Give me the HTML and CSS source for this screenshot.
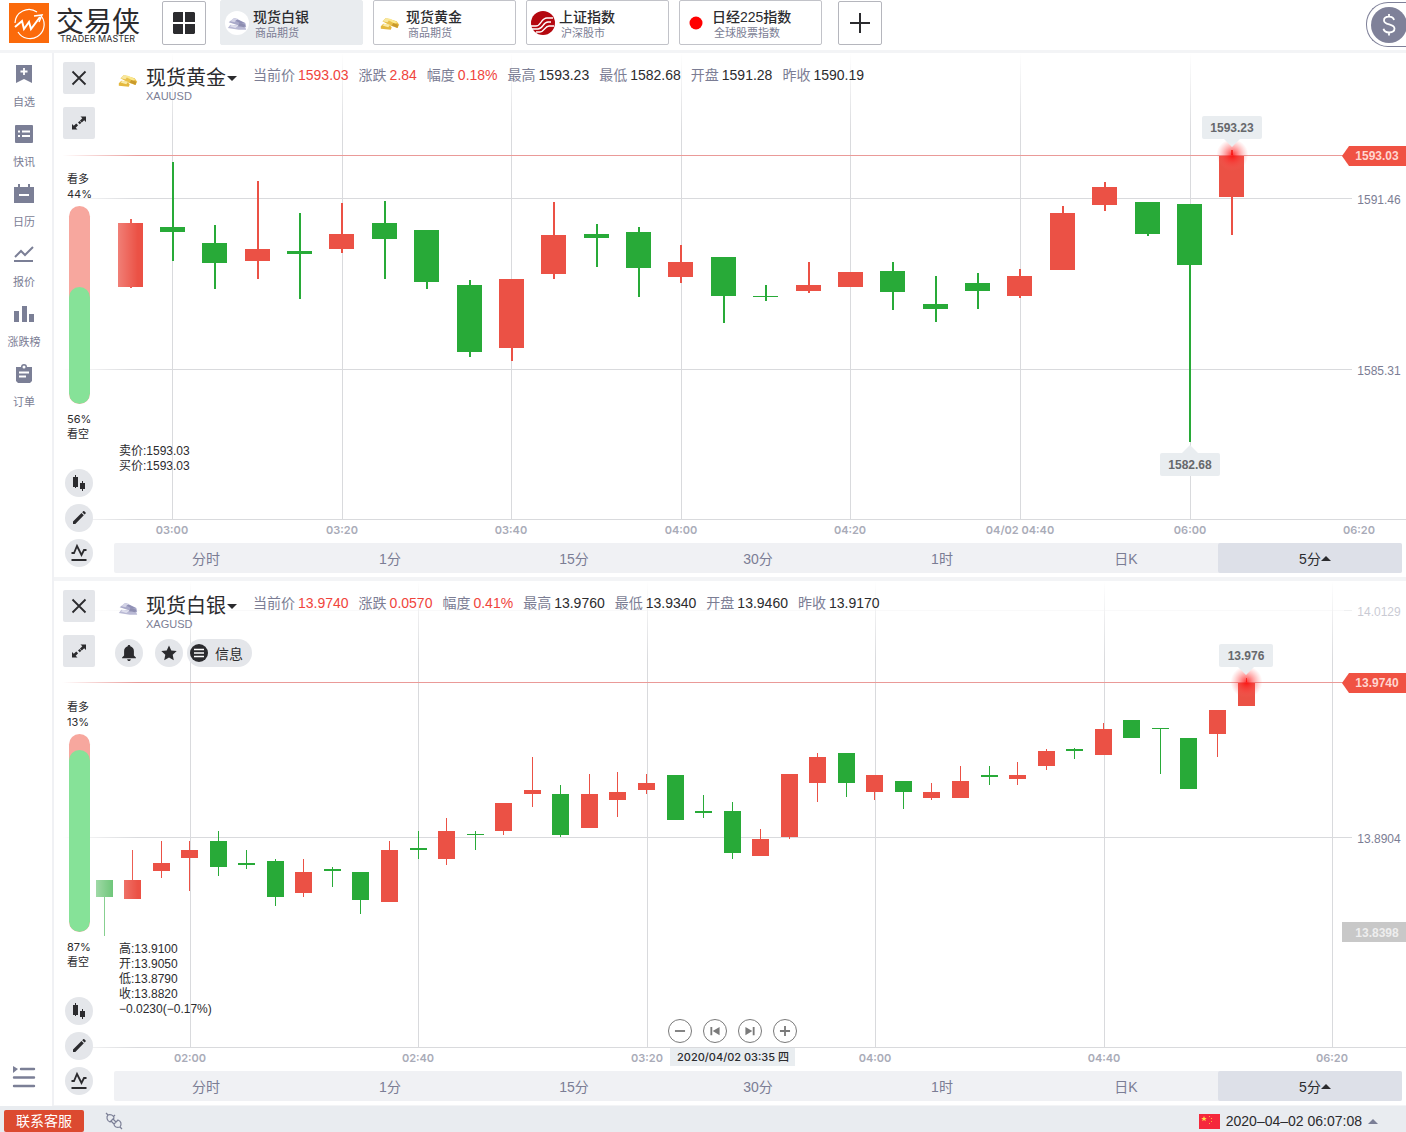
FILE: index.html
```
<!DOCTYPE html>
<html lang="zh-CN">
<head>
    <meta charset="UTF-8">
    <meta name="viewport" content="width=device-width, initial-scale=1.0">
    <title>交易侠</title>
    <link rel="stylesheet" href="styles.css">
</head>
<body>

    <!-- Shared icons -->
    <svg class="sprite" aria-hidden="true">
        <symbol id="i-gold" viewBox="0 0 24 24">
            <path d="M3 10l4-4 13 4 3 4-2 4-9-3z" fill="#e9c04a"/>
            <path d="M3 10l4-4 5 1-3 4z" fill="#f8e7a0"/>
            <path d="M9 8l3-1 9 4-3 2z" fill="#fbe98f"/>
            <path d="M1 16l3-3 7 1 3 3-1 3-12-1z" fill="#e4b83e"/>
            <path d="M3 15l2-2 7 1-2 3z" fill="#f9eaa6"/>
            <path d="M14 15l7 3 1-4-6-2z" fill="#c99a2c"/>
        </symbol>
        <symbol id="i-silver" viewBox="0 0 24 24">
            <path d="M2 11l7-5 5 2 8 4 1 5-9-2z" fill="#a9a9c9"/>
            <path d="M4 10l4-4 5 1-4 4z" fill="#d3d3e6"/>
            <path d="M10 9l3-1 8 4-4 1z" fill="#8f8fb5"/>
            <path d="M1 18l3-4 8 1 10 2 1 3-9 0z" fill="#b9b9d4"/>
            <path d="M3 16l3-2 7 2-3 2z" fill="#dedeed"/>
            <path d="M13 16l8 1 1-3-7-2z" fill="#8d8db0"/>
        </symbol>
        <symbol id="i-close" viewBox="0 0 32 32">
            <path d="M9.500 9.500l13 13M22.500 9.500l-13 13" stroke="#2b2b2e" stroke-width="1.800" fill="none"/>
        </symbol>
        <symbol id="i-expand" viewBox="0 0 32 32">
            <path d="M17.500 9.500H23V15l-1.800-1.800-2.400 2.400-1.900-1.900 2.400-2.400zM14.500 22.500H9V17l1.800 1.800 2.400-2.400 1.900 1.900-2.400 2.400zM15 15.500l1.500-1.500 1.800 1.800-1.500 1.500z" fill="#2b2b2e"/>
        </symbol>
        <symbol id="i-candles" viewBox="0 0 28 28">
            <path d="M8 8h2V6h1v2h2v10h-2v1h-1v-1H8zM15 14h2v-2h1v2h2v6h-2v2h-1v-2h-2z" fill="#2b2b2e"/>
        </symbol>
        <symbol id="i-pencil" viewBox="0 0 28 28">
            <path d="M8 20v-2.500l8.500-8.500 2.300 2.300-8.500 8.700zM17.200 8.300l1-1c.4-.4.8-.3 1.100 0l1.300 1.300c.3.300.3.700 0 1l-1 1z" fill="#2b2b2e"/>
        </symbol>
        <symbol id="i-pulse" viewBox="0 0 28 28">
            <path d="M6.500 14h2.500l3-7 4.500 9 2.500-5h2.500" stroke="#2b2b2e" stroke-width="1.800" fill="none"/>
            <path d="M6.500 20h15v2h-15z" fill="#2b2b2e"/>
        </symbol>
    </svg>

    <header class="header">
        <div class="logo">
            <svg width="40" height="40" viewBox="0 0 40 40">
                <rect width="40" height="40" fill="#fb6a0b"/>
                <path d="M28 9A14 14 0 0 0 6 20M9 29a14 14 0 0 0 24-15" fill="none" stroke="#fff" stroke-width="1.200"/>
                <path d="M6 24l7-6 2 8 5-7 2 7 9-12" fill="none" stroke="#fff" stroke-width="2"/>
                <path d="M25 13l8-1-3 7" fill="none" stroke="#fff" stroke-width="1.500"/>
            </svg>
            <div class="logo-text">
                <span class="logo-name">交易侠</span>
                <span class="logo-sub">TRADER MASTER</span>
            </div>
        </div>
        <button class="square-btn" aria-label="布局">
            <svg width="22" height="22" viewBox="0 0 22 22"><path d="M1 0h9v10H0V1zM12 0h9l1 1v9H12zM0 12h10v10H1l-1-1zM12 12h10v9l-1 1h-9z" fill="#2b2b2e"/></svg>
        </button>
        <div class="symbols">
            <button class="symbol active">
                <svg width="24" height="24" viewBox="0 0 24 24"><circle cx="12" cy="12" r="12" fill="#fff"/><use href="#i-silver" x="2" y="2" width="20" height="20"/></svg>
                <span class="symbol-text"><span class="symbol-name">现货白银</span><span class="symbol-type">商品期货</span></span>
            </button>
            <button class="symbol">
                <svg width="24" height="24" viewBox="0 0 24 24"><use href="#i-gold" x="2" y="2" width="20" height="20"/></svg>
                <span class="symbol-text"><span class="symbol-name">现货黄金</span><span class="symbol-type">商品期货</span></span>
            </button>
            <button class="symbol">
                <svg width="24" height="24" viewBox="0 0 24 24">
                    <circle cx="12" cy="12" r="12" fill="#b4080f"/>
                    <path d="M0 15h5c5 0 5-8 11-8h6M1 18h6c5 0 5-7 10-7h3M5 21h4c4 0 5-6 9-6h5" fill="none" stroke="#fff" stroke-width="1.300"/>
                </svg>
                <span class="symbol-text"><span class="symbol-name">上证指数</span><span class="symbol-type">沪深股市</span></span>
            </button>
            <button class="symbol">
                <svg width="24" height="24" viewBox="0 0 24 24"><circle cx="12" cy="12" r="6.500" fill="#f00"/></svg>
                <span class="symbol-text"><span class="symbol-name">日经225指数</span><span class="symbol-type">全球股票指数</span></span>
            </button>
        </div>
        <button class="square-btn" aria-label="添加">
            <svg width="20" height="20" viewBox="0 0 20 20"><path d="M10 0v20M0 10h20" stroke="#2b2b2e" stroke-width="2"/></svg>
        </button>
        <button class="account" aria-label="账户">
            <svg width="36" height="36" viewBox="0 0 36 36">
                <circle cx="18" cy="18" r="18" fill="#7f8199"/>
                <path d="M23 13c-.5-2.300-2.300-3.300-5-3.300s-5 1.300-5 3.700c0 5.200 10.500 2.900 10.500 8.200 0 2.500-2.200 3.900-5.300 3.900s-5.200-1.400-5.700-3.700M18 7v3M18 25.500v3" fill="none" stroke="#fff" stroke-width="1.800"/>
            </svg>
        </button>
    </header>

    <div class="body">
        <nav class="sidebar">
            <a href="#"><svg width="20" height="20" viewBox="0 0 20 20"><path d="M2 1h16v18l-8-4-8 4z" fill="#7b7f96"/><path d="M10 4v7M6.500 7.500h7" stroke="#fff" stroke-width="1.800"/></svg>自选</a>
            <a href="#"><svg width="20" height="20" viewBox="0 0 20 20"><rect x="1" y="1" width="18" height="18" rx="1" fill="#7b7f96"/><path d="M4 7.500h2M8 7.500h8M4 12h2M8 12h8" stroke="#fff" stroke-width="2"/></svg>快讯</a>
            <a href="#"><svg width="20" height="20" viewBox="0 0 20 20"><path d="M0 3h4V0h2v3h8V0h2v3h4v16H0z" fill="#7b7f96"/><path d="M5 11h10" stroke="#fff" stroke-width="2"/></svg>日历</a>
            <a href="#"><svg width="20" height="20" viewBox="0 0 20 20"><path d="M1 13l6-6 4 4 8-8" fill="none" stroke="#7b7f96" stroke-width="2"/><path d="M0 16h19v2H0z" fill="#7b7f96"/></svg>报价</a>
            <a href="#"><svg width="20" height="20" viewBox="0 0 20 20"><path d="M0 7h5v11H0zM8 2h5v16H8zM15 10h5v8h-5z" fill="#7b7f96"/></svg>涨跌榜</a>
            <a href="#"><svg width="20" height="20" viewBox="0 0 20 20"><path d="M2 3h5a3 3 0 0 1 6 0h5v14l-2 2H4l-2-2z" fill="#7b7f96"/><circle cx="10" cy="3" r="1.500" fill="#fff"/><path d="M5 8.500h10M5 12.500h7" stroke="#fff" stroke-width="1.800"/></svg>订单</a>
            <button class="menu-btn" aria-label="菜单">
                <svg width="24" height="22" viewBox="0 0 24 22"><path d="M1 0l5 3-5 4z" fill="#7b7f96"/><path d="M9 3h13M2 11.500h20M2 20h20" stroke="#7b7f96" stroke-width="2.400" stroke-linecap="round"/></svg>
            </button>
        </nav>

        <main class="panels">
            <section class="panel">
                <svg class="chart" id="chart-gold" viewBox="0 0 1352 490"></svg>
                <div class="tools">
                    <button class="tool-btn" aria-label="关闭"><svg><use href="#i-close"/></svg></button>
                    <button class="tool-btn" aria-label="全屏"><svg><use href="#i-expand"/></svg></button>
                    <div class="sentiment">
                        <span>看多</span>
                        <span>44%</span>
                        <div class="gauge"><div class="gauge-short" style="height: 59%"></div></div>
                        <span>56%</span>
                        <span>看空</span>
                    </div>
                    <button class="round-btn" aria-label="图形"><svg><use href="#i-candles"/></svg></button>
                    <button class="round-btn" aria-label="画线"><svg><use href="#i-pencil"/></svg></button>
                    <button class="round-btn" aria-label="指标"><svg><use href="#i-pulse"/></svg></button>
                </div>
                <div class="info">
                    <div class="quote">
                        <svg class="quote-icon" viewBox="0 0 24 24"><use href="#i-gold"/></svg>
                        <button class="quote-name"><span class="name">现货黄金<i class="caret-down"></i></span><span class="code">XAUUSD</span></button>
                        <dl class="stats">
                            <div class="up"><dt>当前价</dt><dd>1593.03</dd></div>
                            <div class="up"><dt>涨跌</dt><dd>2.84</dd></div>
                            <div class="up"><dt>幅度</dt><dd>0.18%</dd></div>
                            <div><dt>最高</dt><dd>1593.23</dd></div>
                            <div><dt>最低</dt><dd>1582.68</dd></div>
                            <div><dt>开盘</dt><dd>1591.28</dd></div>
                            <div><dt>昨收</dt><dd>1590.19</dd></div>
                        </dl>
                    </div>
                    <div class="readout readout-quote">
                        <span>卖价:1593.03</span>
                        <span>买价:1593.03</span>
                    </div>
                </div>
                <div class="periods">
                    <button>分时</button>
                    <button>1分</button>
                    <button>15分</button>
                    <button>30分</button>
                    <button>1时</button>
                    <button>日K</button>
                    <button class="active">5分<i class="caret-up"></i></button>
                </div>
            </section>

            <section class="panel">
                <svg class="chart" id="chart-silver" viewBox="0 0 1352 490"></svg>
                <div class="tools">
                    <button class="tool-btn" aria-label="关闭"><svg><use href="#i-close"/></svg></button>
                    <button class="tool-btn" aria-label="全屏"><svg><use href="#i-expand"/></svg></button>
                    <div class="sentiment">
                        <span>看多</span>
                        <span>13%</span>
                        <div class="gauge"><div class="gauge-short" style="height: 92%"></div></div>
                        <span>87%</span>
                        <span>看空</span>
                    </div>
                    <button class="round-btn" aria-label="图形"><svg><use href="#i-candles"/></svg></button>
                    <button class="round-btn" aria-label="画线"><svg><use href="#i-pencil"/></svg></button>
                    <button class="round-btn" aria-label="指标"><svg><use href="#i-pulse"/></svg></button>
                </div>
                <div class="info">
                    <div class="quote">
                        <svg class="quote-icon" viewBox="0 0 24 24"><use href="#i-silver"/></svg>
                        <button class="quote-name"><span class="name">现货白银<i class="caret-down"></i></span><span class="code">XAGUSD</span></button>
                        <dl class="stats">
                            <div class="up"><dt>当前价</dt><dd>13.9740</dd></div>
                            <div class="up"><dt>涨跌</dt><dd>0.0570</dd></div>
                            <div class="up"><dt>幅度</dt><dd>0.41%</dd></div>
                            <div><dt>最高</dt><dd>13.9760</dd></div>
                            <div><dt>最低</dt><dd>13.9340</dd></div>
                            <div><dt>开盘</dt><dd>13.9460</dd></div>
                            <div><dt>昨收</dt><dd>13.9170</dd></div>
                        </dl>
                    </div>
                    <div class="actions">
                        <button class="round-btn" aria-label="提醒"><svg viewBox="0 0 28 28"><path d="M14 6c.8 0 1.300.500 1.300 1.300 2.200.600 3.600 2.400 3.600 4.800v4.400l2 2v.8H7.100v-.8l2-2v-4.400c0-2.400 1.400-4.200 3.600-4.800C12.700 6.500 13.200 6 14 6zM12.200 20.200h3.600c0 1-.8 1.800-1.800 1.800s-1.800-.8-1.800-1.800z" fill="#2b2b2e"/></svg></button>
                        <button class="round-btn" aria-label="收藏"><svg viewBox="0 0 28 28"><path d="M14 6.500l2.300 5 5.400.6-4 3.700 1.100 5.400-4.800-2.700-4.800 2.700 1.100-5.400-4-3.700 5.400-.6z" fill="#2b2b2e"/></svg></button>
                        <button class="info-btn"><svg width="18" height="18" viewBox="0 0 18 18"><circle cx="9" cy="9" r="9" fill="#2b2b2e"/><path d="M4 5.500h10M4 9h10M4 12.500h10" stroke="#fff" stroke-width="1.500"/></svg>信息</button>
                    </div>
                    <div class="readout">
                        <span>高:13.9100</span>
                        <span>开:13.9050</span>
                        <span>低:13.8790</span>
                        <span>收:13.8820</span>
                        <span>−0.0230(−0.17%)</span>
                    </div>
                </div>
                <div class="zoom-bar">
                    <button aria-label="缩小"><svg viewBox="0 0 24 24"><path d="M6.500 12h11" stroke="#7a7a7a" stroke-width="2"/></svg></button>
                    <button aria-label="向前"><svg viewBox="0 0 24 24"><path d="M7 7.500h2v9H7zM17 7.500v9L9.500 12z" fill="#7a7a7a"/></svg></button>
                    <button aria-label="向后"><svg viewBox="0 0 24 24"><path d="M15 7.500h2v9h-2zM7 7.500v9l7.500-4.500z" fill="#7a7a7a"/></svg></button>
                    <button aria-label="放大"><svg viewBox="0 0 24 24"><path d="M6.500 12h11M12 6.500v11" stroke="#7a7a7a" stroke-width="2"/></svg></button>
                </div>
                <div class="periods">
                    <button>分时</button>
                    <button>1分</button>
                    <button>15分</button>
                    <button>30分</button>
                    <button>1时</button>
                    <button>日K</button>
                    <button class="active">5分<i class="caret-up"></i></button>
                </div>
            </section>
        </main>
    </div>

    <footer class="footer">
        <button class="service">联系客服</button>
        <svg class="plug" width="18" height="18" viewBox="0 0 18 18"><path d="M1 1l2 2M3 3c2-1 6 0 6 3L5 10C2 9 1 5 3 3zM8 5l2-2M9 12l4-4c3 1 4 4 2 7-3 1-6 0-6-3zM15 15l2 2M6 9l3 3M8 7l3 3" fill="none" stroke="#7b7f96" stroke-width="1.200"/></svg>
        <button class="clock">
            <svg width="21" height="15" viewBox="0 0 21 15"><rect width="21" height="15" fill="#f5283c"/><path d="M5 2l.8 2h2l-1.600 1.300.6 2L5 6.100 3.200 7.300l.6-2L2.200 4h2z" fill="#ffe14a"/><path d="M10 2h1v1h-1zM12 4h1v1h-1zM12 7h1v1h-1zM10 9h1v1h-1z" fill="#ffb03a"/></svg>
            2020–04–02 06:07:08
            <i class="caret-up caret-grey"></i>
        </button>
    </footer>

    <script src="chart.js"></script>
</body>
</html>
```

FILE: styles.css
```
* {
    box-sizing: border-box;
}
body {
    margin: 0;
    min-height: 100vh;
    display: flex;
    flex-direction: column;
    overflow-x: hidden;
    background: #fff;
    color: #2b2b2e;
    font-family: "Liberation Sans", "Noto Sans CJK SC", sans-serif;
    font-size: 14px;
}
button {
    padding: 0;
    border: none;
    background: none;
    color: inherit;
    font: inherit;
    cursor: pointer;
}
svg {
    display: block;
}
.sprite {
    display: none;
}

/* Header */
.header {
    display: flex;
    align-items: flex-start;
    height: 53px;
    border-bottom: 3px solid #f3f4f6;
}
.logo {
    display: flex;
    gap: 7px;
    width: 162px;
    padding: 3px 0 0 9px;
}
.logo-text {
    display: flex;
    flex-direction: column;
}
.logo-name {
    font-family: "Noto Sans CJK SC", sans-serif;
    font-size: 28px;
    line-height: 35px;
}
.logo-sub {
    margin-top: -4px;
    padding-left: 4px;
    font-family: Inter, sans-serif;
    font-size: 9px;
    line-height: 9px;
}
.square-btn {
    display: flex;
    align-items: center;
    justify-content: center;
    width: 44px;
    height: 44px;
    margin-top: 1px;
    border: 1px solid #b5b6bd;
    border-radius: 2px;
}
.symbols {
    display: flex;
    gap: 10px;
    margin: 0 16px 0 14px;
}
.symbol {
    display: flex;
    align-items: center;
    gap: 4px;
    width: 143px;
    height: 45px;
    padding-left: 4px;
    border: 1px solid #c2c3c9;
    border-radius: 2px;
    text-align: left;
}
.symbol.active {
    background: #e9ecef;
    border-color: #e9ecef;
}
.symbol-text {
    display: flex;
    flex-direction: column;
    padding-top: 4px;
}
.symbol-name {
    font-size: 14px;
    font-weight: 500;
    line-height: 17px;
    white-space: nowrap;
}
.symbol-type {
    padding-left: 2px;
    color: #7b7d94;
    font-size: 11px;
    line-height: 15px;
}
.account {
    width: 40px;
    height: 45px;
    margin: 2px 0 0 auto;
    padding-left: 4px;
    border: 1px solid #7f8199;
    border-right: none;
    border-radius: 22px 0 0 22px;
    overflow: hidden;
}

/* Sidebar */
.body {
    flex: 1;
    display: flex;
}
.sidebar {
    display: flex;
    flex-direction: column;
    align-items: center;
    gap: 15px;
    width: 54px;
    padding: 11px 4px 18px 0;
    border-right: 2px solid #f0f1f4;
}
.sidebar a {
    display: flex;
    flex-direction: column;
    align-items: center;
    gap: 11px;
    color: #7b7d94;
    font-size: 11px;
    line-height: 14px;
    text-decoration: none;
}
.menu-btn {
    margin-top: auto;
}

/* Chart panels */
.panels {
    flex: 1;
    min-width: 0;
}
.panel {
    display: grid;
    grid-template-columns: 60px 1fr;
    grid-template-rows: auto 30px;
    padding-bottom: 4px;
    border-bottom: 4px solid #f3f4f6;
}
.panel:last-child {
    border-bottom-width: 1px;
}
.chart {
    grid-area: 1 / 1 / 2 / 3;
    width: 100%;
    height: auto;
    font-size: 12px;
}
.chart text {
    text-anchor: middle;
}
.tools {
    grid-area: 1 / 1 / 3 / 2;
    z-index: 1;
    display: flex;
    flex-direction: column;
    align-items: center;
    gap: 7px;
    width: 50px;
    padding-top: 9px;
}
.tool-btn {
    width: 32px;
    height: 32px;
    margin-bottom: 6px;
    border-radius: 2px;
    background: #e4e6ea;
}
.tool-btn svg,
.round-btn svg {
    width: 100%;
    height: 100%;
}
.sentiment {
    display: flex;
    flex-direction: column;
    width: 24px;
    margin: 20px 0 20px;
    font-family: Inter, "Noto Sans CJK SC", sans-serif;
    font-size: 11px;
    line-height: 15px;
    white-space: nowrap;
}
.gauge {
    display: flex;
    align-items: flex-end;
    width: 21px;
    height: 198px;
    margin: 4px 0 8px 2px;
    border-radius: 11px;
    background: #f7a79e;
    overflow: hidden;
}
.gauge-short {
    width: 100%;
    border-radius: 11px;
    background: #86e298;
}
.round-btn {
    width: 28px;
    height: 28px;
    border-radius: 50%;
    background: #e4e6ea;
}
.info {
    grid-area: 1 / 2 / 2 / 3;
    z-index: 1;
    display: flex;
    flex-direction: column;
    padding: 13px 0 0 4px;
}
.quote {
    display: flex;
    align-items: flex-start;
}
.quote-icon {
    width: 20px;
    height: 20px;
    margin-top: 4px;
}
.quote-name {
    display: flex;
    flex-direction: column;
    width: 107px;
    margin-left: 8px;
    text-align: left;
}
.name {
    display: flex;
    align-items: center;
    gap: 1px;
    font-size: 20px;
    line-height: 25px;
}
.code {
    color: #7b7d94;
    font-size: 11px;
    line-height: 11px;
}
.stats {
    display: flex;
    flex-wrap: wrap;
    gap: 10px;
    margin: 0;
    line-height: 18px;
}
.stats div {
    display: flex;
    gap: 3px;
}
.stats dt {
    color: #7b7d94;
}
.stats dd {
    margin: 0;
}
.up dd {
    color: #f0443c;
}
.actions {
    display: flex;
    gap: 12px;
    margin: 9px 0 0 -3px;
}
.info-btn {
    display: flex;
    align-items: center;
    gap: 7px;
    height: 28px;
    margin-left: -8px;
    padding: 0 9px 0 3px;
    border-radius: 14px;
    background: #e4e6ea;
}
.readout {
    display: flex;
    flex-direction: column;
    margin: auto 0 54px 1px;
    font-size: 12px;
    line-height: 15px;
}
.readout-quote {
    margin-bottom: 69px;
}
.zoom-bar {
    grid-area: 1 / 1 / 2 / 3;
    z-index: 1;
    align-self: end;
    justify-self: center;
    display: flex;
    gap: 11px;
    padding: 0 0 28px 4px;
}
.zoom-bar button {
    width: 24px;
    height: 24px;
    border: 1px solid #7a7a7a;
    border-radius: 50%;
    background: #fff;
}
.periods {
    grid-area: 2 / 2 / 3 / 3;
    display: grid;
    grid-template-columns: repeat(7, 1fr);
    margin-right: 4px;
    border-radius: 2px;
    background: #f0f1f4;
    color: #7b7d94;
}
.periods .active {
    display: flex;
    align-items: center;
    justify-content: center;
    padding-left: 10px;
    border-radius: 2px;
    background: #dde0e8;
    color: #2b2b2e;
}
.caret-down,
.caret-up {
    display: inline-block;
    border: 5px solid transparent;
}
.caret-down {
    border-top-color: #2b2b2e;
    border-bottom: none;
}
.caret-up {
    border-bottom-color: #2b2b2e;
    border-top: none;
}
.caret-grey {
    border-bottom-color: #7b7f96;
}

/* Chart drawing */
.grid {
    stroke: #d9dadd;
}
.axis-time,
.date-text {
    font-family: Inter, "Noto Sans CJK SC", sans-serif;
    font-size: 11px;
}
.axis-time {
    fill: #a9abb8;
    font-weight: 600;
}
.axis-price {
    fill: #7b7d94;
}
.faint {
    opacity: 0.4;
}
.rise {
    fill: #eb5145;
}
.fall {
    fill: #28aa38;
}
.price-line {
    stroke: #ea9a98;
}
.price-tag {
    fill: #f05243;
}
.price-tag-text {
    fill: #ffd6d0;
    font-weight: 600;
}
.ghost-tag {
    fill: #c8c8c8;
}
.ghost-tag-text {
    fill: #eee;
    font-weight: 600;
}
.tip {
    fill: #e9edf0;
}
.tip-text {
    fill: #66686c;
    font-weight: 600;
}
.date-text {
    fill: #2b2b2e;
    font-weight: 500;
}

/* Footer */
.footer {
    display: flex;
    align-items: center;
    height: 26px;
    padding: 4px 28px 0 4px;
    background: #e9ecf0;
}
.service {
    width: 80px;
    height: 22px;
    border-radius: 2px;
    background: #dc4a30;
    color: #fff;
    line-height: 22px;
}
.plug {
    margin-left: 21px;
}
.clock {
    display: flex;
    align-items: center;
    gap: 6px;
    margin-left: auto;
    white-space: nowrap;
}
```

FILE: chart.js
```
// Each candle: [rise, high, top, bottom, low]
const gold = {
    id: "chart-gold",
    start: 76.5, step: 42.38, body: 25, wick: 2,
    times: [[118, "03:00"], [288, "03:20"], [457, "03:40"], [627, "04:00"], [796, "04:20"], [966, "04/02 04:40"], [1136, "06:00"], [1305, "06:20", true]],
    prices: [[145, "1591.46"], [316, "1585.31"]],
    line: 102, lineText: "1593.03",
    tips: [[1178, 63, "1593.23", 60, "down"], [1136, 400, "1582.68", 60, "up"]],
    candles: [
        [1, 166, 170, 234, 235], [0, 109, 174, 179, 208], [0, 172, 190, 210, 236],
        [1, 128, 196, 208, 226], [0, 160, 198, 201, 246], [1, 150, 181, 196, 200],
        [0, 148, 170, 186, 226], [0, 177, 177, 229, 236], [0, 227, 232, 299, 304],
        [1, 226, 226, 295, 308], [1, 149, 182, 221, 226], [0, 171, 181, 185, 214],
        [0, 174, 179, 215, 244], [1, 192, 209, 224, 230], [0, 204, 204, 243, 270],
        [0, 232, 243, 244, 248], [1, 209, 232, 238, 240], [1, 219, 219, 234, 234],
        [0, 209, 218, 239, 257], [0, 223, 251, 256, 269], [0, 220, 230, 238, 256],
        [1, 216, 223, 243, 245], [1, 153, 160, 217, 217], [1, 129, 134, 152, 158],
        [0, 149, 149, 181, 183], [0, 151, 151, 212, 389], [1, 97, 103, 144, 182]
    ]
};

const silver = {
    id: "chart-silver",
    start: 50.5, step: 28.55, body: 17, wick: 1,
    times: [[136, "02:00"], [364, "02:40"], [593, "03:20"], [821, "04:00"], [1050, "04:40"], [1278, "06:20"]],
    prices: [[29, "14.0129", true], [256, "13.8904"]],
    line: 101, lineText: "13.9740",
    ghost: [351, "13.8398"],
    date: [679, "2020/04/02 03:35 四"],
    tips: [[1192, 63, "13.976", 54, "down"]],
    candles: [
        [0, 299, 299, 316, 355], [1, 269, 299, 318, 318], [1, 260, 282, 290, 297],
        [1, 260, 269, 277, 310], [0, 250, 260, 286, 295], [0, 269, 282, 284, 288],
        [0, 278, 280, 316, 325], [1, 278, 291, 312, 316], [0, 286, 288, 290, 306],
        [0, 291, 291, 319, 333], [1, 260, 269, 321, 321], [0, 250, 267, 269, 278],
        [1, 237, 250, 278, 284], [0, 250, 253, 254, 269], [1, 222, 222, 250, 254],
        [1, 176, 209, 213, 226], [0, 204, 213, 254, 256], [1, 193, 213, 247, 247],
        [1, 191, 211, 219, 236], [1, 193, 202, 209, 213], [0, 194, 194, 239, 239],
        [0, 214, 230, 232, 237], [0, 221, 230, 272, 278], [1, 248, 258, 275, 275],
        [1, 193, 193, 256, 258], [1, 172, 176, 202, 221], [0, 172, 172, 202, 216],
        [1, 194, 194, 211, 219], [0, 200, 200, 211, 228], [1, 202, 211, 217, 219],
        [1, 185, 200, 217, 217], [0, 185, 194, 196, 204], [1, 181, 194, 198, 204],
        [1, 168, 170, 185, 189], [0, 167, 168, 170, 178], [1, 142, 148, 174, 174],
        [0, 139, 139, 157, 157], [0, 147, 147, 148, 193], [0, 157, 157, 208, 208],
        [1, 129, 129, 153, 176], [1, 97, 101, 125, 125]
    ]
};

function line(x1, y1, x2, y2, cls) {
    return `<line x1="${x1}" y1="${y1}" x2="${x2}" y2="${y2}" class="${cls}"/>`;
}

function rect(x, y, w, h, cls) {
    return `<rect x="${x}" y="${y}" width="${w}" height="${h}" class="${cls}"/>`;
}

function label(x, y, text, cls) {
    return `<text x="${x}" y="${y}" class="${cls}">${text}</text>`;
}

function draw(c) {
    const axis = 466;
    const glow = c.id + "-glow", left = c.id + "-left", top = c.id + "-top";
    let out = `<defs>
        <radialGradient id="${glow}"><stop offset="0" stop-color="#f00" stop-opacity=".8"/><stop offset="1" stop-color="#f66" stop-opacity="0"/></radialGradient>
        <linearGradient id="${left}"><stop offset="0.1" stop-color="#fff"/><stop offset="1" stop-color="#fff" stop-opacity="0"/></linearGradient>
        <linearGradient id="${top}" x2="0" y2="1"><stop offset="0" stop-color="#fff"/><stop offset="1" stop-color="#fff" stop-opacity="0"/></linearGradient>
    </defs>`;

    // Grid
    c.times.forEach(([x, text, noLine]) => {
        if (!noLine) out += line(x + 0.5, 0, x + 0.5, axis, "grid");
        out += label(x, 481, text, "axis-time");
    });
    c.prices.forEach(([y, text, faint]) => {
        out += line(0, y + 0.5, 1298, y + 0.5, faint ? "grid faint" : "grid");
        out += label(1325, y + 6, text, faint ? "axis-price faint" : "axis-price");
    });
    out += `<rect width="1290" height="80" fill="url(#${top})"/>`;
    out += line(0, axis + 0.5, 1352, axis + 0.5, "grid");

    // Candles
    c.candles.forEach(([rise, high, bodyTop, bottom, low], i) => {
        const bodyX = Math.floor(c.start + i * c.step - c.body / 2);
        const wickX = bodyX + Math.floor(c.body / 2);
        const cls = rise ? "rise" : "fall";
        out += rect(wickX, high, c.wick, low - high, cls);
        out += rect(bodyX, bodyTop, c.body, bottom - bodyTop, cls);
    });

    // Current price
    const last = c.start + (c.candles.length - 1) * c.step;
    out += line(0, c.line + 0.5, 1290, c.line + 0.5, "price-line");
    out += `<circle cx="${last}" cy="${c.line}" r="16" fill="url(#${glow})"/>`;
    out += `<path class="price-tag" d="M1288 ${c.line + 1}l7-10h57v20h-57z"/>`;
    out += label(1323, c.line + 5, c.lineText, "price-tag-text");
    out += `<rect width="84" height="${axis + 2}" fill="url(#${left})"/>`;

    c.tips.forEach(([x, y, text, w, dir]) => {
        out += `<rect x="${x - w / 2}" y="${y}" width="${w}" height="23" rx="2" class="tip"/>`;
        out += dir === "down"
            ? `<path class="tip" d="M${x - 8} ${y + 23}h16l-8 8z"/>`
            : `<path class="tip" d="M${x - 8} ${y}h16l-8 -8z"/>`;
        out += label(x, y + 16, text, "tip-text");
    });
    if (c.ghost) {
        out += rect(1288, c.ghost[0] - 10, 64, 20, "ghost-tag");
        out += label(1323, c.ghost[0] + 5, c.ghost[1], "ghost-tag-text");
    }
    if (c.date) {
        out += rect(c.date[0] - 63, axis + 1, 125, 18, "tip");
        out += label(c.date[0], 480, c.date[1], "date-text");
    }
    document.getElementById(c.id).innerHTML = out;
}

draw(gold);
draw(silver);
```
